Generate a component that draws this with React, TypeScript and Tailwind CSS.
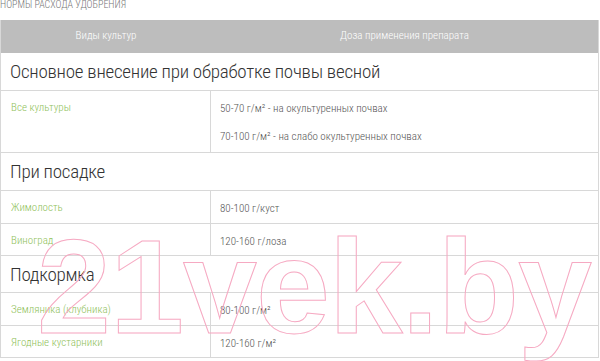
import React from "react";

const font = "font-['Roboto_Condensed','Roboto','Liberation_Sans',sans-serif]";

function Section({ title, h }: { title: string; h: string }) {
  return (
    <div className={`flex items-center border-b border-[#d8d8d8] pl-[9px] ${h}`}>
      <span className="text-[19px] font-light text-[#333] leading-none tracking-[-0.25px]">{title}</span>
    </div>
  );
}

function Row({ name, doses, h }: { name: string; doses: string[]; h: string }) {
  return (
    <div className={`flex border-b border-[#d8d8d8] ${h}`}>
      <div className="w-[210px] shrink-0 border-r border-[#d8d8d8] pl-[10px] pt-[10px] text-[11px] font-light leading-[13px] text-[#8fbf5a]">
        {name}
      </div>
      <div className="flex-1 pl-[9px] pt-[11px] flex flex-col gap-[15px] text-[11px] font-light leading-[13px] text-[#555]">
        {doses.map((d) => (
          <div key={d}>{d}</div>
        ))}
      </div>
    </div>
  );
}

export default function App() {
  return (
    <div className={`relative w-[600px] h-[361px] overflow-hidden bg-white ${font}`}>
      <div className="h-[20px] text-[10px] font-light leading-[10px] text-[#777] uppercase">
        Нормы расхода удобрения
      </div>
      <div className="w-[599px] border-l border-r border-[#d8d8d8]">
        <div className="flex h-[33px] bg-[#bdbdbd] text-white text-[11px] font-light">
          <div className="w-[210px] flex items-center justify-center">Виды культур</div>
          <div className="flex-1 flex items-center justify-center">Доза применения препарата</div>
        </div>
        <Section title="Основное внесение при обработке почвы весной" h="h-[38px]" />
        <Row
          name="Все культуры"
          doses={["50-70 г/м² - на окультуренных почвах", "70-100 г/м² - на слабо окультуренных почвах"]}
          h="h-[62px]"
        />
        <Section title="При посадке" h="h-[38px]" />
        <Row name="Жимолость" doses={["80-100 г/куст"]} h="h-[33px]" />
        <Row name="Виноград" doses={["120-160 г/лоза"]} h="h-[32px]" />
        <Section title="Подкормка" h="h-[37px]" />
        <Row name="Земляника (клубника)" doses={["80-100 г/м²"]} h="h-[33px]" />
        <Row name="Ягодные кустарники" doses={["120-160 г/м²"]} h="h-[32px]" />
      </div>
      <svg className="pointer-events-none absolute left-0 top-0" width="600" height="361">
        <text
          x="37"
          y="333"
          fontFamily="'Liberation Sans', Arial, sans-serif"
          fontWeight="700"
          fontSize="133"
          fill="none"
          stroke="#f6a9c2"
          strokeWidth="1"
          letterSpacing="-1"
        >
          21vek.by
        </text>
      </svg>
    </div>
  );
}
